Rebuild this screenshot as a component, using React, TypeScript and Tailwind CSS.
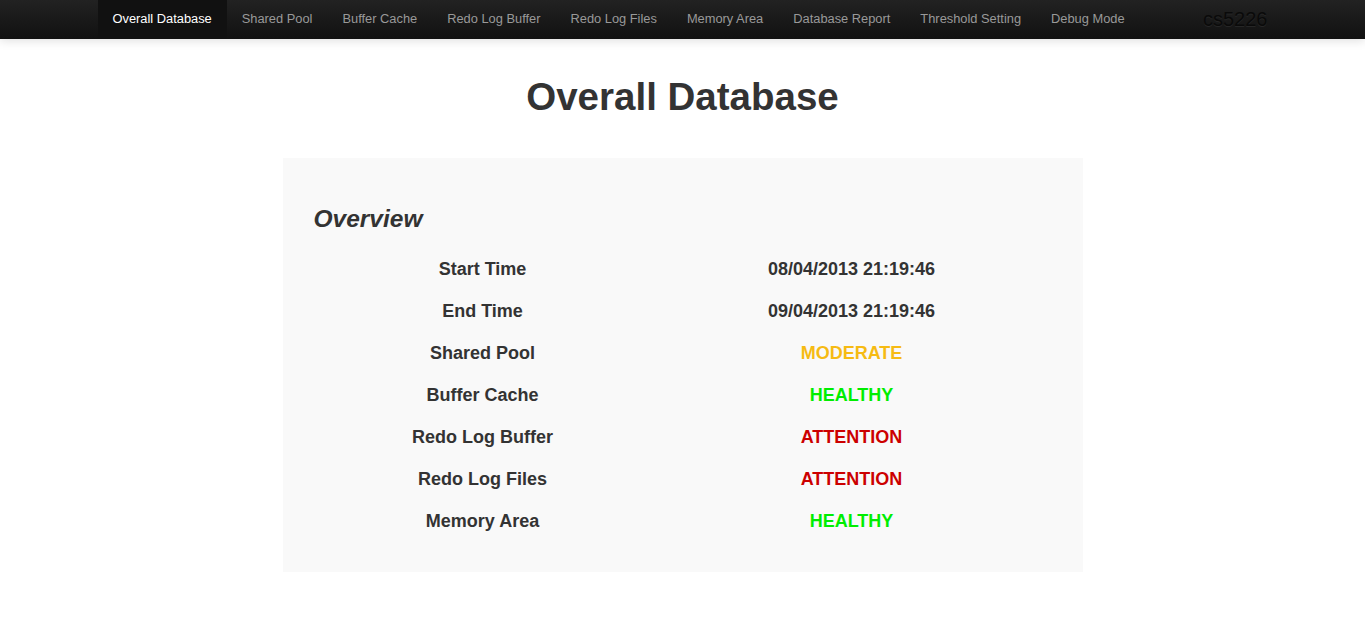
import React from "react";

const navItems = [
  "Overall Database",
  "Shared Pool",
  "Buffer Cache",
  "Redo Log Buffer",
  "Redo Log Files",
  "Memory Area",
  "Database Report",
  "Threshold Setting",
  "Debug Mode",
];

const rows: { label: string; value: string; color: string }[] = [
  { label: "Start Time", value: "08/04/2013 21:19:46", color: "text-[#333333]" },
  { label: "End Time", value: "09/04/2013 21:19:46", color: "text-[#333333]" },
  { label: "Shared Pool", value: "MODERATE", color: "text-[#f6bb13]" },
  { label: "Buffer Cache", value: "HEALTHY", color: "text-[#00ee00]" },
  { label: "Redo Log Buffer", value: "ATTENTION", color: "text-[#cc0000]" },
  { label: "Redo Log Files", value: "ATTENTION", color: "text-[#cc0000]" },
  { label: "Memory Area", value: "HEALTHY", color: "text-[#00ee00]" },
];

function Navbar() {
  return (
    <div className="h-[39px] bg-gradient-to-b from-[#222222] to-[#111111] shadow-[0_1px_10px_rgba(0,0,0,0.15)]">
      <div className="w-[1170px] mx-auto flex items-stretch h-full">
        <ul className="flex h-full">
          {navItems.map((item, i) => (
            <li
              key={item}
              className={
                i === 0
                  ? "px-[15px] pb-[2px] flex items-center h-full bg-[#111111] text-white text-[12.85px]"
                  : "px-[15px] pb-[2px] flex items-center h-full text-[#999999] text-[12.85px]"
              }
            >
              {item}
            </li>
          ))}
        </ul>
        <div className="ml-auto pb-[2px] flex items-center text-[20px] text-[#0a0a0a] [text-shadow:0_1px_0_#262626]">
          cs5226
        </div>
      </div>
    </div>
  );
}

export default function App() {
  return (
    <div className="min-h-[640px] bg-white font-['Liberation_Sans',Arial,sans-serif] text-[#333333]">
      <Navbar />
      <h1 className="text-center text-[38.5px] font-bold leading-[40px] mt-[38px] text-[#333333]">
        Overall Database
      </h1>
      <div className="w-[800px] mx-auto mt-[41px] bg-[#f9f9f9] pt-[44px] pb-[30px] px-[31px]">
        <h3 className="italic font-bold text-[24.5px] leading-[34px]">Overview</h3>
        <div className="mt-[12px]">
          {rows.map((r) => (
            <div key={r.label} className="grid grid-cols-[338px_400px] h-[42px] items-center text-[18px] font-bold">
              <div className="text-center">{r.label}</div>
              <div className={"text-center " + r.color}>{r.value}</div>
            </div>
          ))}
        </div>
      </div>
    </div>
  );
}
